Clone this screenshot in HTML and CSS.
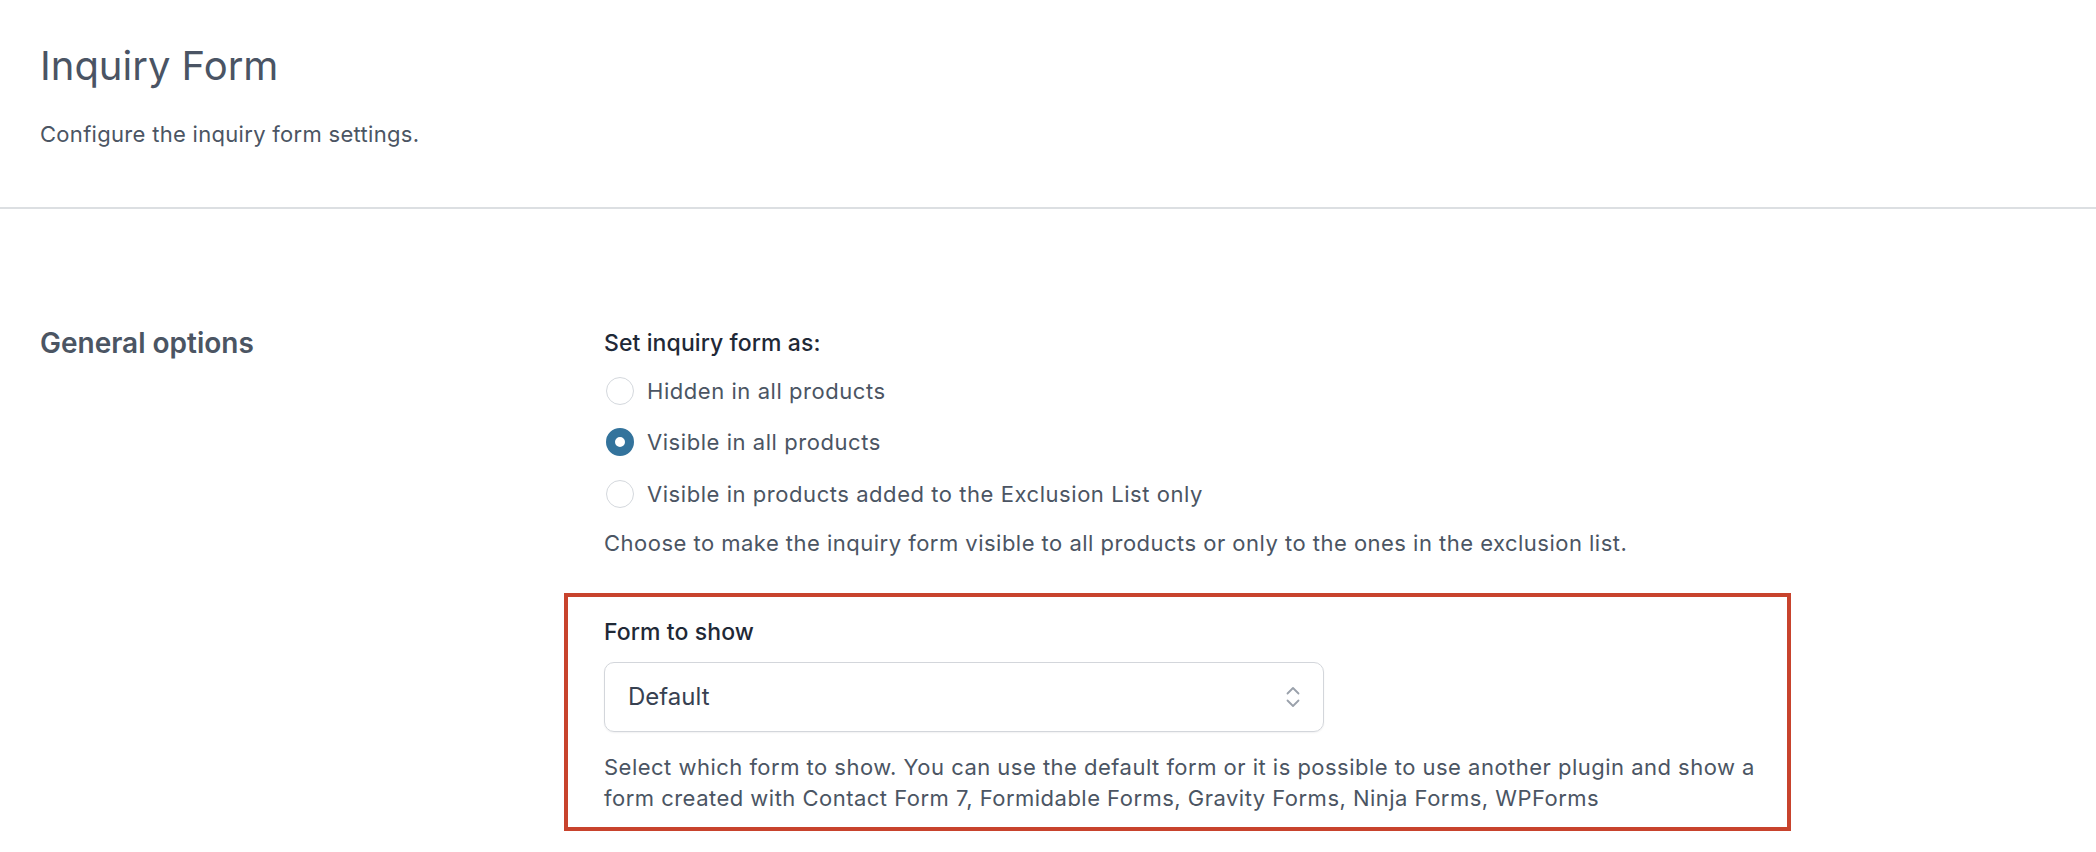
FILE: index.html
```html
<!DOCTYPE html>
<html lang="en">
<head>
<meta charset="utf-8">
<title>Inquiry Form</title>
<link rel="stylesheet" href="styles.css">
</head>
<body>
<header class="page-header">
  <h1 class="page-title">Inquiry Form</h1>
  <p class="page-subtitle">Configure the inquiry form settings.</p>
</header>
<section class="settings-section">
  <h2 class="section-title">General options</h2>
  <div class="section-fields">
    <div class="field">
      <div class="field-label">Set inquiry form as:</div>
      <ul class="radio-list">
        <li class="radio-row"><span class="radio"></span><span class="radio-text">Hidden in all products</span></li>
        <li class="radio-row"><span class="radio radio-checked"></span><span class="radio-text">Visible in all products</span></li>
        <li class="radio-row"><span class="radio"></span><span class="radio-text">Visible in products added to the Exclusion List only</span></li>
      </ul>
      <p class="field-help">Choose to make the inquiry form visible to all products or only to the ones in the exclusion list.</p>
    </div>
    <div class="field highlight">
      <div class="field-label">Form to show</div>
      <div class="select">
        <span class="select-value">Default</span>
        <svg class="select-icon" width="16" height="24" viewBox="0 0 16 24" fill="none" stroke="#9aa1ab" stroke-width="1.8" stroke-linecap="round" stroke-linejoin="round"><path d="M2.5 8.5 L8 3 L13.5 8.5"/><path d="M2.5 15.5 L8 21 L13.5 15.5"/></svg>
      </div>
      <p class="field-help help-wide">Select which form to show. You can use the default form or it is possible to use another plugin and show a form created with Contact Form 7, Formidable Forms, Gravity Forms, Ninja Forms, WPForms</p>
    </div>
  </div>
</section>
</body>
</html>
```
FILE: styles.css
```css
html, body {
  margin: 0;
  padding: 0;
  background: #ffffff;
}
body {
  font-family: Inter, "Noto Sans", "Liberation Sans", sans-serif;
  color: #4b5563;
  -webkit-font-smoothing: antialiased;
}
.page-header {
  box-sizing: border-box;
  height: 209px;
  padding: 42px 40px 0;
  border-bottom: 2px solid #dcdfe2;
}
.page-title {
  margin: 0;
  font-size: 40px;
  line-height: 48px;
  font-weight: 400;
  color: #4a5464;
}
.page-subtitle {
  margin: 30px 0 0;
  font-size: 22px;
  line-height: 28px;
  letter-spacing: 0.3px;
  color: #4b5563;
}
.settings-section {
  display: grid;
  grid-template-columns: 564px 1fr;
  padding: 116px 40px 0;
}
.section-title {
  margin: 0;
  font-size: 28px;
  line-height: 36px;
  font-weight: 600;
  color: #4b5563;
}
.section-fields {
  display: flex;
  flex-direction: column;
  padding-top: 4px;
}
.field-label {
  font-size: 23px;
  line-height: 28px;
  font-weight: 500;
  letter-spacing: 0.1px;
  color: #1f2937;
}
.radio-list {
  list-style: none;
  margin: 8px 0 0;
  padding: 0;
}
.radio-row {
  display: flex;
  align-items: center;
  height: 51.5px;
}
.radio {
  box-sizing: border-box;
  width: 28px;
  height: 28px;
  margin-left: 2px;
  margin-right: 13px;
  border-radius: 50%;
  border: 1px solid #d4d8dd;
  background: #fff;
  flex: none;
}
.radio-checked {
  border: 9px solid #33739c;
  background: #fff;
}
.radio-text {
  font-size: 22px;
  line-height: 28px;
  letter-spacing: 0.55px;
  color: #4b5563;
}
.field-help {
  margin: 8px 0 0;
  font-size: 22px;
  line-height: 31px;
  letter-spacing: 0.48px;
  color: #4b5563;
}
.highlight {
  box-sizing: border-box;
  width: 1227px;
  margin: 34px 0 0 -40px;
  padding: 21px 22px 13px 36px;
  border: 4px solid #c8432d;
}
.select {
  box-sizing: border-box;
  display: flex;
  align-items: center;
  justify-content: space-between;
  width: 720px;
  height: 70px;
  margin-top: 16px;
  padding: 0 22px 0 23px;
  border: 1px solid #d3d6db;
  border-radius: 10px;
  box-shadow: 0 1px 2px rgba(16, 24, 40, 0.06);
}
.select-value {
  font-size: 24px;
  color: #374151;
}
.select-icon {
  display: block;
}
.help-wide {
  margin-top: 20px;
}
```
